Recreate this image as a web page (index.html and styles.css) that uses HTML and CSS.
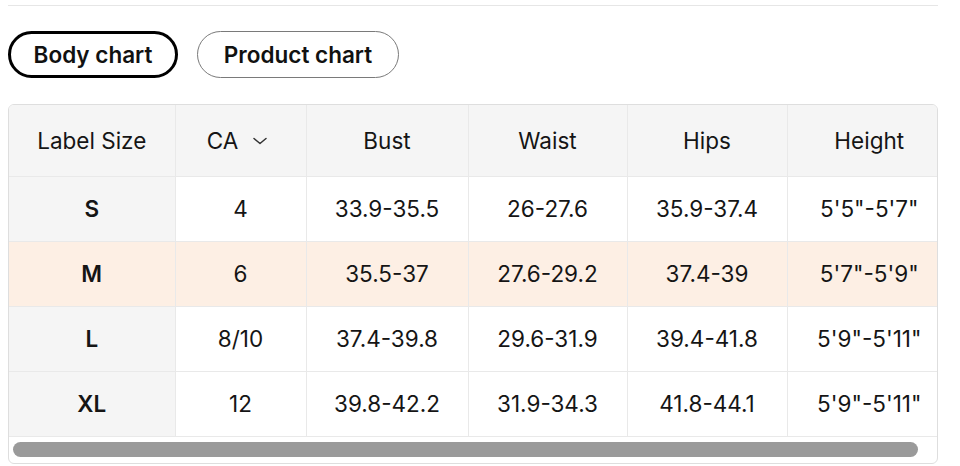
FILE: index.html
```html
<!DOCTYPE html>
<html lang="en">
<head>
<meta charset="utf-8">
<title>Size chart</title>
<link rel="stylesheet" href="styles.css">
</head>
<body>
<div class="page">
  <div class="rule"></div>
  <div class="tabs">
    <button class="tab tab-active">Body chart</button>
    <button class="tab">Product chart</button>
  </div>
  <div class="table-box">
    <table class="chart">
      <colgroup>
        <col class="c1"><col class="c2"><col class="c3"><col class="c4"><col class="c5"><col class="c6">
      </colgroup>
      <thead>
        <tr>
          <th>Label Size</th>
          <th><span class="ca">CA <svg class="chev" width="16" height="10" viewBox="0 0 16 10"><path d="M2 2.5 L8 7.5 L14 2.5" fill="none" stroke="#333" stroke-width="1.5" stroke-linecap="round" stroke-linejoin="round"/></svg></span></th>
          <th>Bust</th>
          <th>Waist</th>
          <th>Hips</th>
          <th>Height</th>
        </tr>
      </thead>
      <tbody>
        <tr><td class="lbl">S</td><td>4</td><td>33.9-35.5</td><td>26-27.6</td><td>35.9-37.4</td><td>5'5"-5'7"</td></tr>
        <tr class="hl"><td class="lbl">M</td><td>6</td><td>35.5-37</td><td>27.6-29.2</td><td>37.4-39</td><td>5'7"-5'9"</td></tr>
        <tr><td class="lbl">L</td><td>8/10</td><td>37.4-39.8</td><td>29.6-31.9</td><td>39.4-41.8</td><td>5'9"-5'11"</td></tr>
        <tr><td class="lbl">XL</td><td>12</td><td>39.8-42.2</td><td>31.9-34.3</td><td>41.8-44.1</td><td>5'9"-5'11"</td></tr>
      </tbody>
    </table>
    <div class="scroll-track"><div class="scroll-thumb"></div></div>
  </div>
</div>
</body>
</html>
```

FILE: styles.css
```css
* { box-sizing: border-box; }
html, body { margin: 0; padding: 0; background: #fff; }
body {
  font-family: Inter, "Liberation Sans", Arial, sans-serif;
  color: #151515;
}
.page {
  width: 960px;
  padding: 5px 22px 0 8px;
}
.rule {
  height: 1px;
  background: #e6e6e6;
}
.tabs {
  display: flex;
  gap: 19px;
  margin-top: 25px;
}
.tab {
  display: flex;
  align-items: center;
  justify-content: center;
  height: 47px;
  border-radius: 24px;
  border: 1.5px solid #7a7a7a;
  background: #fff;
  font-family: inherit;
  font-size: 22.5px;
  font-weight: 600;
  color: #111;
  padding: 0;
  white-space: nowrap;
  width: 202px;
}
.tab-active {
  border: 3px solid #000;
  width: 170px;
}
.table-box {
  margin-top: 26px;
  border: 1px solid #dedede;
  border-radius: 6px;
  overflow: hidden;
  width: 930px;
}
.chart {
  border-collapse: collapse;
  table-layout: fixed;
  width: 942px;
  font-size: 22.5px;
}
.c1 { width: 166px; }
.c2 { width: 131px; }
.c3 { width: 162px; }
.c4 { width: 159px; }
.c5 { width: 160px; }
.c6 { width: 164px; }
.chart th, .chart td {
  border-right: 1px solid #e9e9e9;
  border-bottom: 1px solid #e9e9e9;
  text-align: center;
  white-space: nowrap;
  padding: 0;
}
.chart th:last-child, .chart td:last-child { border-right: none; }
.chart th {
  height: 71px;
  background: #f5f5f5;
  font-weight: 400;
}
.chart td { height: 65px; background: #fff; }
.chart td.lbl { background: #f5f5f5; font-weight: 600; }
.chart tr.hl td { background: #fdefe4; }
.ca { display: inline-flex; align-items: center; gap: 14px; padding-right: 6px; }
.chev { display: block; margin-top: 2px; }
.scroll-track {
  height: 26px;
  padding: 5px 19px 0 4px;
}
.scroll-thumb {
  height: 15px;
  border-radius: 8px;
  background: #9a9a9a;
}
```
